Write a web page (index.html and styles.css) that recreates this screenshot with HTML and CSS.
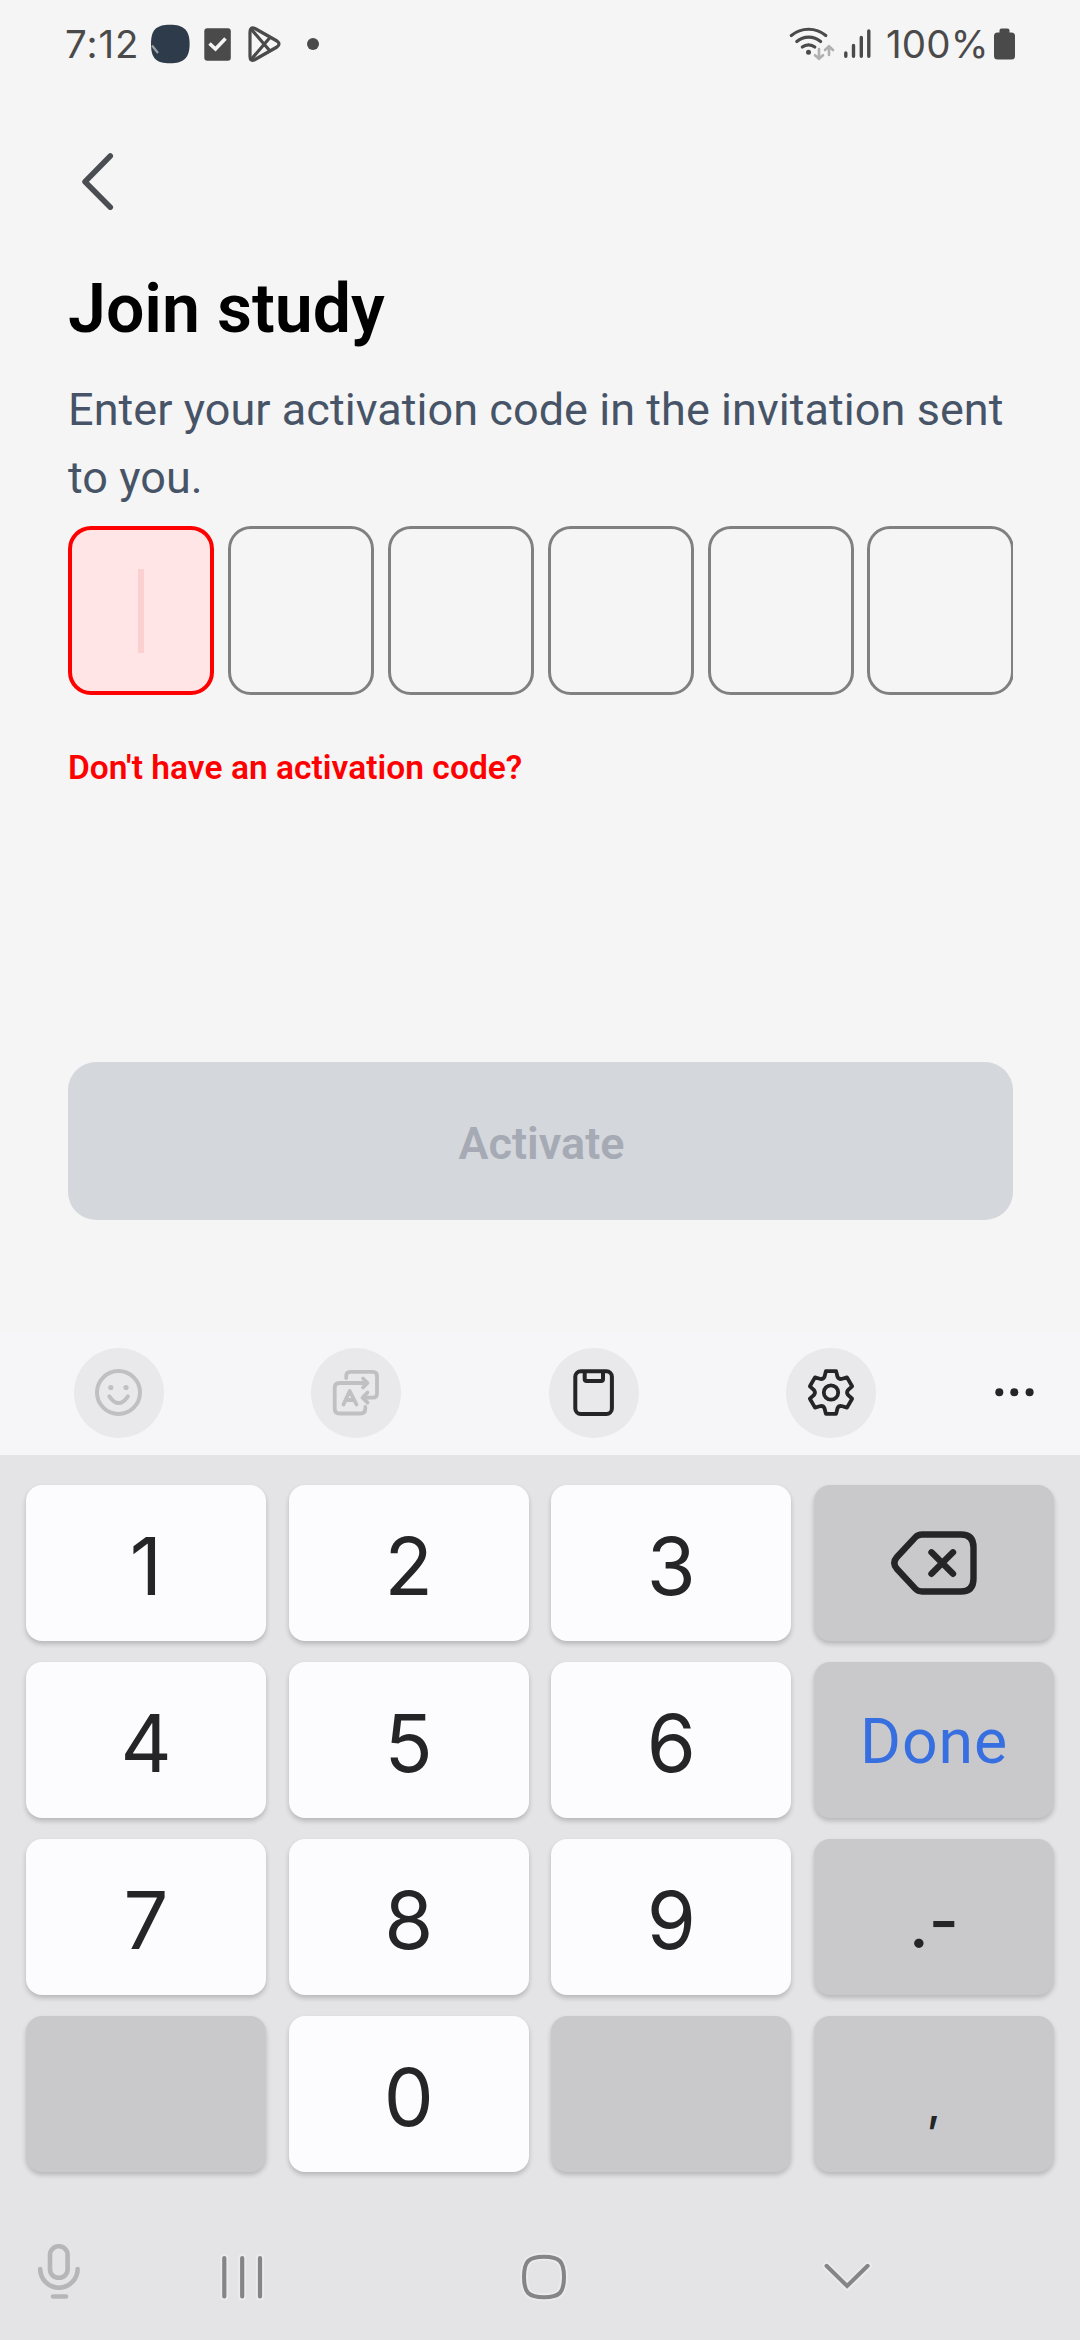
FILE: index.html
```html
<!DOCTYPE html>
<html lang="en">
<head>
<meta charset="utf-8">
<title>Join study</title>
<link rel="stylesheet" href="styles.css">
</head>
<body>
<div class="screen">
  <header class="status">
    <span class="clock">7:12</span>
    <svg class="app-icon" viewBox="151 24 40 40" width="40" height="40"><path d="M170 24.8c14 0 19.600 5.500 19.600 19.200S184 63.300 170 63.300 151 58 151 44s5-19.200 19-19.200z" fill="#2e3b4a"/><path d="M152 45.500l6 7.500" stroke="#9aa3a8" stroke-width="2.200"/></svg>
    <svg class="check-icon" viewBox="204 28 28 34" width="28" height="34"><rect x="204.300" y="28.300" width="26.500" height="32.500" rx="3" fill="#4a4a4a"/><path d="M209.500 43.500l6 5.500 10-10.500" fill="none" stroke="#f4f4f4" stroke-width="3.600"/></svg>
    <svg class="play-icon" viewBox="247 26 36 38" width="36" height="38" fill="none" stroke="#4a4a4a" stroke-width="3.200" stroke-linejoin="round"><path d="M250 32v24.500q0 5.500 5 3l22-12.500q4-3 0-6L255 28.500q-5-2-5 3.500z"/><path d="M251.500 29.500L270 51M251.500 59L270 37.500"/></svg>
    <svg class="more-icon" viewBox="306 37 14 14" width="14" height="14"><circle cx="313" cy="44" r="6" fill="#4a4a4a"/></svg>
    <span class="spacer"></span>
    <svg class="wifi-icon" viewBox="788 25 48 38" width="48" height="38" fill="none" stroke-linecap="round" stroke="#4a4a4a" stroke-width="3.200"><path d="M791.300 35.500a27 27 0 0 1 34.500 0M796.800 41.500a18.500 18.500 0 0 1 23.800 0M802.300 47a10 10 0 0 1 12.500 0"/><circle cx="808.500" cy="52.300" r="2.500" fill="#4a4a4a" stroke="none"/><path d="M819 49v9.500M815 55.200l4 3.600 4-3.600M829 55v-8.500M825 50l4-3.800 4 3.800" stroke="#b0b0b0" stroke-width="2.600"/></svg>
    <svg class="signal-icon" viewBox="844 28 28 31" width="28" height="31" stroke="#4a4a4a" stroke-width="3.400" stroke-linecap="round"><path d="M845.800 53v3.200M853.500 45.500v10.700M861.300 37.500v18.700M868.800 31v25.200"/></svg>
    <span class="percent">100%</span>
    <svg class="battery-icon" viewBox="994 28 22 32" width="22" height="32" fill="#4a4a4a"><rect x="999.500" y="28.500" width="10" height="8" rx="2"/><rect x="994" y="32.500" width="21" height="27" rx="3.500"/></svg>
  </header>

  <main class="page">
    <svg class="back" viewBox="80 150 36 64" width="36" height="64"><path d="M110.300 156L85 181.700l25.300 25.500" fill="none" stroke="#4a4d52" stroke-width="5.500" stroke-linecap="round" stroke-linejoin="round"/></svg>
    <h1 class="title">Join study</h1>
    <p class="lead">Enter your activation code in the invitation sent<br>to you.</p>
    <div class="code">
      <div class="cell cell-active"><span class="caret"></span></div>
      <div class="cell"></div>
      <div class="cell"></div>
      <div class="cell"></div>
      <div class="cell"></div>
      <div class="cell"></div>
    </div>
    <a class="help">Don't have an activation code?</a>
    <button class="activate">Activate</button>
  </main>

  <section class="keyboard">
    <div class="tools">
      <span class="tool"><svg viewBox="74 1348 90 90" width="90" height="90" fill="none" stroke="#c0c0c2" stroke-width="4" stroke-linecap="round"><circle cx="118.500" cy="1392.500" r="21.500"/><path d="M109.300 1396.300q9.400 13.500 18.600 0"/><circle cx="110.800" cy="1387.500" r="2.600" fill="#c0c0c2" stroke="none"/><circle cx="126" cy="1387.500" r="2.600" fill="#c0c0c2" stroke="none"/></svg></span>
      <span class="tool"><svg viewBox="311 1348 90 90" width="90" height="90" fill="none" stroke="#c0c0c2" stroke-width="3.800" stroke-linecap="round" stroke-linejoin="round"><path d="M346.200 1378v-2q0-4.200 4.200-4.200h22.400q4.200 0 4.200 4.200v17.500q0 4.200-4.200 4.200H363M367.500 1392.500l-5 5.200 5 5"/><path d="M367 1383h-27.300q-5 0-5 5v20.500q0 5 5 5h20.600q5 0 5-5V1407M363 1378.500l4.500 4.500-4.500 4.500"/><path d="M343.500 1404.500l6.200-13.500 6.800 13.500M346 1400h8"/></svg></span>
      <span class="tool"><svg viewBox="549 1348 90 90" width="90" height="90" fill="none" stroke="#252527" stroke-width="4"><rect x="575.300" y="1371.300" width="36.600" height="42.700" rx="5.500"/><path d="M584.700 1371.500v7.500q0 2 2 2H601q2 0 2-2v-7.500"/></svg></span>
      <span class="tool"><svg viewBox="-45 -44.500 90 90" width="90" height="90" fill="none" stroke="#252527" stroke-width="3.800" stroke-linejoin="round"><path d="M-5.100-21.400H5.100L6.500-15.800Q7.600-13.200 10.430-13.530L16-15.100 21.100-6.200 16.930-2.270Q15.200 0 16.930 2.270L21.100 6.200 16 15.100 10.430 13.530Q7.600 13.200 6.500 15.800L5.100 21.400H-5.100L-6.500 15.800Q-7.600 13.200-10.430 13.530L-16 15.100-21.100 6.200-16.930 2.270Q-15.200 0-16.930-2.270L-21.100-6.200-16-15.100-10.430-13.530Q-7.600-13.200-6.500-15.800z"/><circle r="7.200"/></svg></span>
      <svg class="overflow" viewBox="994 1387 42 10" width="42" height="10" fill="#252527"><circle cx="999.300" cy="1392.300" r="4"/><circle cx="1014.300" cy="1392.300" r="4"/><circle cx="1029.600" cy="1392.300" r="4"/></svg>
    </div>
    <div class="keys">
      <div class="key">1</div><div class="key">2</div><div class="key">3</div>
      <div class="key key-alt key-icon"><svg viewBox="889 1528 90 70" width="90" height="70" fill="none" stroke="#252527" stroke-width="6.400" stroke-linecap="round" stroke-linejoin="round"><path d="M922 1534.500h39q12.500 0 12.500 13v31q0 13-12.500 13h-39q-4 0-6.500-2.600l-18.500-19.900q-5.400-6 0-12l18.500-19.900q2.500-2.600 6.500-2.600z"/><path d="M931.500 1552.300l21.500 21.500M953 1552.300l-21.500 21.500"/></svg></div>
      <div class="key">4</div><div class="key">5</div><div class="key">6</div>
      <div class="key key-alt key-done">Done</div>
      <div class="key">7</div><div class="key">8</div><div class="key">9</div>
      <div class="key key-alt key-sym">.-</div>
      <div class="key key-alt"></div><div class="key">0</div><div class="key key-alt"></div>
      <div class="key key-alt key-comma">,</div>
    </div>
    <nav class="nav">
      <svg class="mic" viewBox="36 2242 46 60" width="46" height="60" fill="none" stroke="#b6b6b8" stroke-width="4.600" stroke-linecap="round"><rect x="50" y="2246.300" width="17.600" height="31.500" rx="8.500"/><path d="M40.200 2269a18.700 18.700 0 0 0 37.400 0M53 2296.500h13"/></svg>
      <svg class="recents" viewBox="220 2252 44 50" width="44" height="50" stroke-linecap="round"><path d="M224.300 2258v38.500M242.200 2258v38.500M260 2258v38.500" stroke="#ebebed" stroke-width="8"/><path d="M224.300 2258v38.500M242.200 2258v38.500M260 2258v38.500" stroke="#858587" stroke-width="4.200"/></svg>
      <svg class="home" viewBox="519 2252 50 50" width="50" height="50" fill="none"><path d="M544 2256.800c15.500 0 20 4.500 20 20.200s-4.500 20.200-20 20.200-20-4.500-20-20.200 4.500-20.200 20-20.200z" stroke="#ebebed" stroke-width="8"/><path d="M544 2256.800c15.500 0 20 4.500 20 20.200s-4.500 20.200-20 20.200-20-4.500-20-20.200 4.500-20.200 20-20.200z" stroke="#858587" stroke-width="4"/></svg>
      <svg class="hide" viewBox="820 2258 54 36" width="54" height="36" fill="none" stroke-linecap="round"><path d="M826.500 2265.800l20.600 20.200 20.600-20.200" stroke="#ebebed" stroke-width="8"/><path d="M826.500 2265.800l20.600 20.200 20.600-20.200" stroke="#858587" stroke-width="4"/></svg>
    </nav>
  </section>
</div>
</body>
</html>
```
FILE: styles.css
```css
* { box-sizing: border-box; margin: 0; }
body { background: #f5f5f5; font-family: Roboto, sans-serif; }
svg { display: block; flex: none; }
.screen { width: 1080px; height: 2340px; display: flex; flex-direction: column; overflow: hidden; }

.status { height: 88px; display: flex; align-items: flex-start; padding: 0 64px 0 65px; color: #4a4a4a; font-family: Inter, sans-serif; }
.clock, .percent { flex: none; font-size: 38.5px; font-weight: 400; line-height: 88px; white-space: nowrap; }
.clock { width: 86px; letter-spacing: 0.9px; }
.percent { width: 108px; margin-left: 14px; letter-spacing: 0.2px; }
.app-icon { margin-top: 24px; }
.check-icon { margin: 28px 0 0 13px; }
.play-icon { margin: 26px 0 0 15px; }
.more-icon { margin: 37px 0 0 23px; }
.spacer { flex: 1; }
.wifi-icon { margin-top: 25px; }
.signal-icon { margin: 28px 0 0 8px; }
.battery-icon { margin-top: 28px; }

.page { height: 1244px; padding: 62px 67px 0 68px; display: flex; flex-direction: column; align-items: flex-start; }
.back { margin-left: 12px; }
.title { margin-top: 55px; font-size: 68px; font-weight: 600; line-height: 80px; color: #000; white-space: nowrap; }
.lead { margin-top: 27px; font-size: 45px; letter-spacing: 0.05px; line-height: 68px; color: #475467; white-space: nowrap; }
.code { width: 945px; margin-top: 14px; display: flex; gap: 13.7px; overflow: hidden; }
.cell { flex: none; width: 146.200px; height: 169px; border: 3px solid #808080; border-radius: 23px; display: flex; align-items: center; justify-content: center; }
.cell-active { border: 4px solid #f00; background: #ffe5e5; }
.caret { width: 6px; height: 84px; background: #fbd0d0; }
.help { margin-top: 53px; font-size: 33.5px; font-weight: 600; letter-spacing: 0.04px; line-height: 40px; color: #f00; white-space: nowrap; }
.activate { width: 945px; height: 158px; margin-top: 274px; padding: 5px 0 0 2px; border: 0; border-radius: 28px; background: #d4d7dc; color: #a6aab4; font: 600 45px Roboto, sans-serif; }

.keyboard { height: 1008px; background: #e4e4e6; }
.tools { height: 123px; padding: 16px 44px 0 74px; background: #f6f6f9; display: flex; gap: 147.4px; }
.tool { flex: none; width: 90px; height: 90px; border-radius: 50%; background: #e9e9eb; }
.overflow { margin: 39px 0 0 -30px; }
.keys { padding: 30px 26px 0; display: grid; grid-template-columns: repeat(4, 240px); column-gap: 22.67px; grid-auto-rows: 156px; row-gap: 21px; }
.key { display: flex; align-items: center; justify-content: center; padding-top: 6px; border-radius: 16px; background: #fcfcfe; box-shadow: 0 3px 5px rgba(0, 0, 0, .2); color: #252527; font: 400 79.3px Inter, sans-serif; }
.key-alt { background: #c9c9cb; }
.key-icon { padding-top: 0; }
.key-done { padding-top: 2px; color: #376fe0; font: 400 62.5px Roboto, sans-serif; letter-spacing: 0.9px; }
.key-sym { padding-top: 14px; font-size: 65px; font-weight: 500; font-feature-settings: "case"; }
.key-comma { padding-top: 19px; font-size: 46px; font-weight: 500; }
.nav { padding: 70px 0 0 36px; display: flex; align-items: flex-start; }
.recents { margin: 10px 0 0 138px; }
.home { margin: 10px 0 0 255px; }
.hide { margin: 16px 0 0 251px; }
```
